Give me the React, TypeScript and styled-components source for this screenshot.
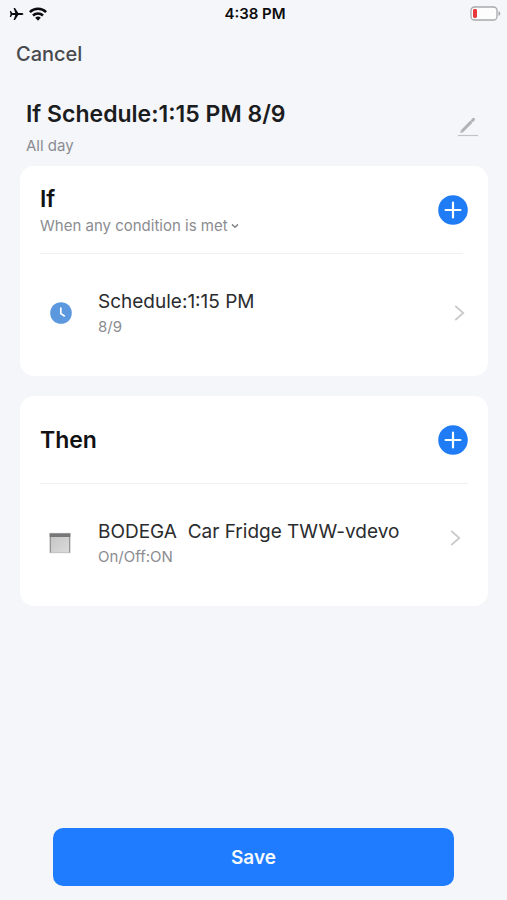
import React from "react";
import styled, { createGlobalStyle } from "styled-components";

const GlobalStyle = createGlobalStyle`
  *, *::before, *::after { box-sizing: border-box; }
  body {
    margin: 0;
    background: #f5f6fa;
    color: #1b1c1e;
    font-family: Inter, "Liberation Sans", sans-serif;
  }
  button, select { font: inherit; color: inherit; }
  h1, h2, p { margin: 0; }
`;

const Screen = styled.div`
  display: flex;
  flex-direction: column;
  min-height: 100vh;
`;

const StatusBar = styled.header`
  display: grid;
  grid-template-columns: 1fr auto 1fr;
  align-items: center;
  height: 27px;
  padding: 0 6px 0 9px;
  color: #0c0c0e;
`;

const Signals = styled.div`
  display: flex;
  align-items: center;
  gap: 5px;
`;

const Clock = styled.time`
  font-size: 15px;
  line-height: 20px;
  font-weight: 600;
`;

const BatterySlot = styled.div`
  display: flex;
  justify-content: flex-end;
`;

const NavBar = styled.nav`
  display: flex;
  align-items: center;
  height: 53px;
  padding: 0 16px;
`;

const PlainButton = styled.button`
  display: flex;
  padding: 0;
  border: 0;
  background: none;
  cursor: pointer;
`;

const CancelButton = styled(PlainButton)`
  color: #48494d;
  font-size: 20px;
  line-height: 24px;
  font-weight: 500;
`;

const Main = styled.main`
  display: flex;
  flex-direction: column;
  gap: 20px;
  padding: 0 19px 0 20px;
`;

const SceneHeader = styled.div`
  display: flex;
  justify-content: space-between;
  align-items: center;
  padding: 18px 29px 10px 26px;
`;

const Titles = styled.div`
  display: flex;
  flex-direction: column;
  gap: 6px;
`;

const SceneTitle = styled.h1`
  font-size: 23px;
  line-height: 32px;
  font-weight: 600;
`;

const Caption = styled.p`
  color: #8b8c90;
  font-size: 15px;
  line-height: 20px;
`;

const Card = styled.section`
  padding: 0 20px;
  border-radius: 14px;
  background: #fff;
`;

const CardHeader = styled.div<{ $inset?: boolean }>`
  display: flex;
  justify-content: space-between;
  align-items: center;
  height: 88px;
  background: linear-gradient(#f1f1f4, #f1f1f4) left bottom / ${({ $inset }) =>
    $inset ? "calc(100% - 5px)" : "100%"} 1px no-repeat;
`;

const CardTitle = styled.h2`
  color: #111214;
  font-size: 23px;
  line-height: 30px;
  font-weight: 600;
`;

const ConditionHeading = styled.div`
  padding-top: 2px;
`;

const ModePicker = styled.label`
  display: flex;
  align-items: center;
  gap: 3px;
`;

const ModeSelect = styled.select`
  appearance: none;
  field-sizing: content;
  height: 24px;
  padding: 0;
  border: 0;
  background: none;
  color: #8b8c90;
  font-size: 15px;
  line-height: 24px;
`;

const AddButton = styled(PlainButton)`
  border-radius: 50%;
`;

const Item = styled.button<{ $inset: number }>`
  display: grid;
  grid-template-columns: 42px 1fr auto;
  align-items: center;
  column-gap: 16px;
  width: 100%;
  height: 122px;
  padding: 0 ${({ $inset }) => $inset}px 4px 0;
  border: 0;
  background: none;
  text-align: left;
  cursor: pointer;
`;

const ItemIcon = styled.span`
  display: flex;
  justify-content: center;
`;

const ItemText = styled.span`
  display: flex;
  flex-direction: column;
`;

const ItemName = styled.span`
  color: #2b2c2e;
  font-size: 19px;
  line-height: 28px;
  white-space: pre;
`;

const ItemDetail = styled.span`
  color: #8b8c90;
  font-size: 15px;
  line-height: 22px;
`;

const ItemArrow = styled.span<{ $raised?: boolean }>`
  display: flex;
  padding-bottom: ${({ $raised }) => ($raised ? 10 : 0)}px;
`;

const Footer = styled.footer`
  margin-top: auto;
  padding: 20px 53px 14px;
`;

const SaveButton = styled.button`
  width: 100%;
  height: 58px;
  padding: 2px 0 0;
  border: 0;
  border-radius: 10px;
  background: #1f7cff;
  color: #f4f9ff;
  font-size: 19px;
  line-height: 24px;
  font-weight: 600;
  cursor: pointer;
`;

const AirplaneIcon = () => (
  <svg width="15" height="14" viewBox="0 0 15 14" aria-hidden="true">
    <path
      fill="currentColor"
      d="M14.4 7c0 .7-1 1.1-2 1.1H9.3L6 13H4.6l1.7-4.9H3.2L1.9 9.9H.8L1.5 7 .8 4.1h1.1l1.3 1.8h3.1L4.6 1H6l3.3 4.9h3.1c1 0 2 .4 2 1.1z"
    />
  </svg>
);

const WifiIcon = () => (
  <svg width="18" height="14" viewBox="0 0 18 14" aria-hidden="true">
    <g fill="none" stroke="currentColor" strokeWidth="2.5">
      <path d="M.9 5.1a11.4 11.4 0 0 1 16.2 0" />
      <path d="M4 8.5a7.1 7.1 0 0 1 10 0" />
    </g>
    <path fill="currentColor" d="M9 13.7 6.2 10.8a4 4 0 0 1 5.6 0z" />
  </svg>
);

const BatteryIcon = () => (
  <svg width="31" height="15" viewBox="0 0 31 15" role="img" aria-label="Low battery">
    <rect x="1" y="1" width="26" height="13" rx="3.5" fill="#fdfdfe" stroke="#a9a9ac" strokeWidth="1.3" />
    <rect x="3" y="3" width="4" height="9" rx="1.4" fill="#e8383c" />
    <path d="M28.5 5.2c1.2.4 1.8 1.2 1.8 2.3s-.6 1.9-1.8 2.3z" fill="#a9a9ac" />
  </svg>
);

const PencilIcon = () => (
  <svg width="20" height="20" viewBox="0 0 20 20" aria-hidden="true">
    <path d="M4 14.2 13.4 4.6" stroke="#b2b3b6" strokeWidth="3" />
    <path d="M14.4 3.5l1.1-1.1" stroke="#b2b3b6" strokeWidth="3" strokeLinecap="round" />
    <path d="M2.3 15.9l.6-2.8 2.2 2.2z" fill="#b2b3b6" />
    <path d="M0 18.5h20" stroke="#c2c3c6" strokeWidth="1.2" />
  </svg>
);

const PlusIcon = () => (
  <svg width="30" height="30" viewBox="0 0 30 30" aria-hidden="true">
    <circle cx="15" cy="15" r="14.8" fill="#1f7cf5" />
    <path d="M15 7.6v14.8M7.6 15h14.8" stroke="#fff" strokeWidth="2.2" strokeLinecap="round" />
  </svg>
);

const CaretIcon = () => (
  <svg width="8" height="6" viewBox="0 0 8 6" aria-hidden="true">
    <path d="M1 1.4 4 4.2 7 1.4" fill="none" stroke="#85868a" strokeWidth="1.5" />
  </svg>
);

const ClockIcon = () => (
  <svg width="22" height="22" viewBox="0 0 22 22" aria-hidden="true">
    <circle cx="11" cy="11" r="10.8" fill="#5c98de" />
    <path d="M10.8 5.6v6l4 2.6" fill="none" stroke="#fff" strokeWidth="1.7" />
  </svg>
);

const FridgeIcon = () => (
  <svg width="24" height="22" viewBox="0 0 24 22" aria-hidden="true">
    <defs>
      <linearGradient id="fridge-body" x1="0" y1="0" x2="1" y2="1">
        <stop offset="0" stopColor="#c4c4c5" />
        <stop offset="1" stopColor="#dcdcdd" />
      </linearGradient>
    </defs>
    <rect x="1" y="4" width="20" height="17" fill="url(#fridge-body)" />
    <rect x=".5" y="1" width="21" height="4" fill="#77777a" />
    <path d="M1 1.4h20" stroke="#a5a5a8" strokeWidth=".8" />
    <path d="M1.3 5v16M20.7 5v16" stroke="#8d8d90" strokeWidth="1.2" />
    <path d="M1 20.7h20" stroke="#bcbcbe" strokeWidth=".8" />
  </svg>
);

const ChevronIcon = () => (
  <svg width="11" height="18" viewBox="0 0 11 18" aria-hidden="true">
    <path d="M1.3 2 9.3 9l-8 7" fill="none" stroke="#c9c9cc" strokeWidth="1.7" />
  </svg>
);

type RuleItemProps = {
  icon: React.ReactNode;
  name: string;
  detail: string;
  inset: number;
  raisedArrow?: boolean;
};

const RuleItem = ({ icon, name, detail, inset, raisedArrow }: RuleItemProps) => (
  <Item type="button" $inset={inset}>
    <ItemIcon>{icon}</ItemIcon>
    <ItemText>
      <ItemName>{name}</ItemName>
      <ItemDetail>{detail}</ItemDetail>
    </ItemText>
    <ItemArrow $raised={raisedArrow}>
      <ChevronIcon />
    </ItemArrow>
  </Item>
);

export default function App() {
  return (
    <Screen>
      <GlobalStyle />
      <StatusBar>
        <Signals>
          <AirplaneIcon />
          <WifiIcon />
        </Signals>
        <Clock>4:38 PM</Clock>
        <BatterySlot>
          <BatteryIcon />
        </BatterySlot>
      </StatusBar>
      <NavBar>
        <CancelButton type="button">Cancel</CancelButton>
      </NavBar>
      <SceneHeader>
        <Titles>
          <SceneTitle>If Schedule:1:15 PM 8/9</SceneTitle>
          <Caption>All day</Caption>
        </Titles>
        <PlainButton type="button" aria-label="Edit name">
          <PencilIcon />
        </PlainButton>
      </SceneHeader>
      <Main>
        <Card>
          <CardHeader $inset>
            <ConditionHeading>
              <CardTitle>If</CardTitle>
              <ModePicker>
                <ModeSelect aria-label="Condition mode" defaultValue="any">
                  <option value="any">When any condition is met</option>
                </ModeSelect>
                <CaretIcon />
              </ModePicker>
            </ConditionHeading>
            <AddButton type="button" aria-label="Add condition">
              <PlusIcon />
            </AddButton>
          </CardHeader>
          <RuleItem icon={<ClockIcon />} name="Schedule:1:15 PM" detail="8/9" inset={3} />
        </Card>
        <Card>
          <CardHeader>
            <CardTitle>Then</CardTitle>
            <AddButton type="button" aria-label="Add action">
              <PlusIcon />
            </AddButton>
          </CardHeader>
          <RuleItem
            icon={<FridgeIcon />}
            name="BODEGA  Car Fridge TWW-vdevo"
            detail="On/Off:ON"
            inset={7}
            raisedArrow
          />
        </Card>
      </Main>
      <Footer>
        <SaveButton type="button">Save</SaveButton>
      </Footer>
    </Screen>
  );
}
